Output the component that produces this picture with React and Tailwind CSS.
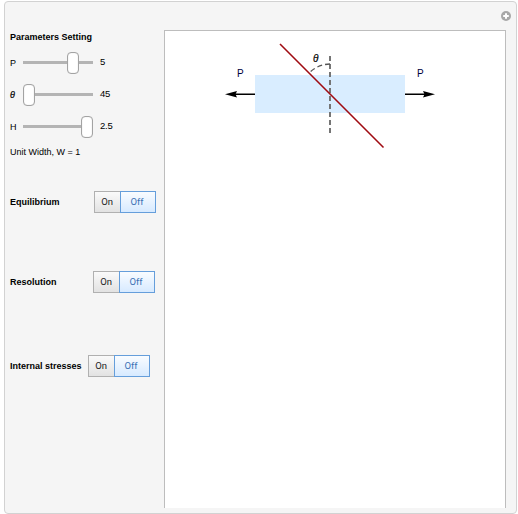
const sliders = [
  { label: "P", value: "5", offset: "ml-[44px]" },
  { label: "θ", value: "45", offset: "ml-0", italic: true },
  { label: "H", value: "2.5", offset: "ml-[58px]" },
];

function Slider({ label, value, offset, italic }) {
  return (
    <div className="flex h-8 items-center text-[9px]">
      <span className={`w-[13px] pt-[1px] ${italic ? "italic [-webkit-text-stroke:0.2px_black]" : ""}`}>{label}</span>
      <div className="flex h-[22px] w-[70px] items-center bg-[linear-gradient(#b4b4b4,#b4b4b4)] bg-[length:70px_3px] bg-[position:0_9px] bg-no-repeat">
        <div className={`h-[22px] w-3 rounded-[4px] border border-[#a3a3a3] bg-white shadow-[inset_0_0_1px_#bbb] ${offset}`} />
      </div>
      <span className="ml-[7px] pb-[1px] text-[9.5px] tracking-[-0.2px]">{value}</span>
    </div>
  );
}

function Toggle({ label, gap }) {
  return (
    <div className="flex h-[22px] items-center">
      <span className={`pt-[2px] text-[9px] font-bold whitespace-nowrap ${gap}`}>{label}</span>
      <div className="flex h-[22px] font-[Roboto,sans-serif] text-[9.5px] tracking-[-0.1px]">
        <button className="flex w-[26px] items-center justify-center border border-r-0 border-[#b0b0b0] bg-linear-to-b from-[#fafafa] to-[#e2e2e2] pr-[1px] text-[#222]">On</button>
        <button className="flex w-9 items-center justify-center border border-[#659edb] bg-linear-to-b from-[#f9fcff] to-[#d7eaff] text-[#3c71b5]">
          <span className="pr-[2px]">Off</span>
        </button>
      </div>
    </div>
  );
}

function Diagram() {
  return (
    <svg width="341" height="477" viewBox="165 31 341 477" className="block">
      <rect x="255" y="75" width="150" height="38" fill="#d9edff" />
      <path d="M330 56V133" stroke="#757575" strokeWidth="2" strokeDasharray="5 3" />
      <path d="M330 64A30 30 0 0 0 309 73" fill="none" stroke="#555" strokeWidth="1.3" strokeDasharray="5 3" />
      <path d="M280 44L383.5 147.5" stroke="#a00b12" strokeWidth="1.6" />
      <path d="M234 94.300H255M405 94.300H426" stroke="#000" strokeWidth="1.4" />
      <path d="M225 94.300L237 91L235.500 94.300L237 97.600ZM435 94.300L423 91L424.500 94.300L423 97.600Z" />
      <g fontFamily="Liberation Sans, sans-serif" fontSize="10">
        <text x="237" y="77" fill="#000040">P</text>
        <text x="417" y="77" fill="#000040">P</text>
        <text x="313" y="62" fontStyle="italic" stroke="#000" strokeWidth="0.2">θ</text>
      </g>
    </svg>
  );
}

export default function App() {
  return (
    <div className="h-[514px] w-[518px] overflow-hidden bg-white pt-[1px] pl-1 font-['Liberation_Sans',sans-serif] text-black">
      <div className="flex h-[513px] w-[513px] rounded-[4px] border border-[#d2d2d2] bg-[#f5f5f5]">
        <aside className="w-[159px] pt-[29px] pl-[5px]">
          <h1 className="h-4 text-[9px] leading-[12px] font-bold">Parameters Setting</h1>
          {sliders.map((s) => (
            <Slider key={s.label} {...s} />
          ))}
          <p className="mt-[3px] text-[9px] leading-[12px]">Unit Width, W = 1</p>
          <div className="mt-[33px]">
            <Toggle label="Equilibrium" gap="w-[84px]" />
          </div>
          <div className="mt-[58px]">
            <Toggle label="Resolution" gap="w-[83px]" />
          </div>
          <div className="mt-[62px]">
            <Toggle label="Internal stresses" gap="w-[78px]" />
          </div>
        </aside>
        <div className="w-[352px]">
          <div className="flex h-7 items-center justify-end pr-[5px]">
            <svg width="10" height="10" viewBox="0 0 10 10">
              <circle cx="5" cy="5" r="5" fill="#a8a8a8" />
              <path d="M5 2.200V7.800M2.200 5H7.800" stroke="#fff" strokeWidth="2" />
            </svg>
          </div>
          <main className="h-[478px] w-[342px] border border-b-0 border-[#bdbdbd] bg-white">
            <Diagram />
          </main>
        </div>
      </div>
    </div>
  );
}
